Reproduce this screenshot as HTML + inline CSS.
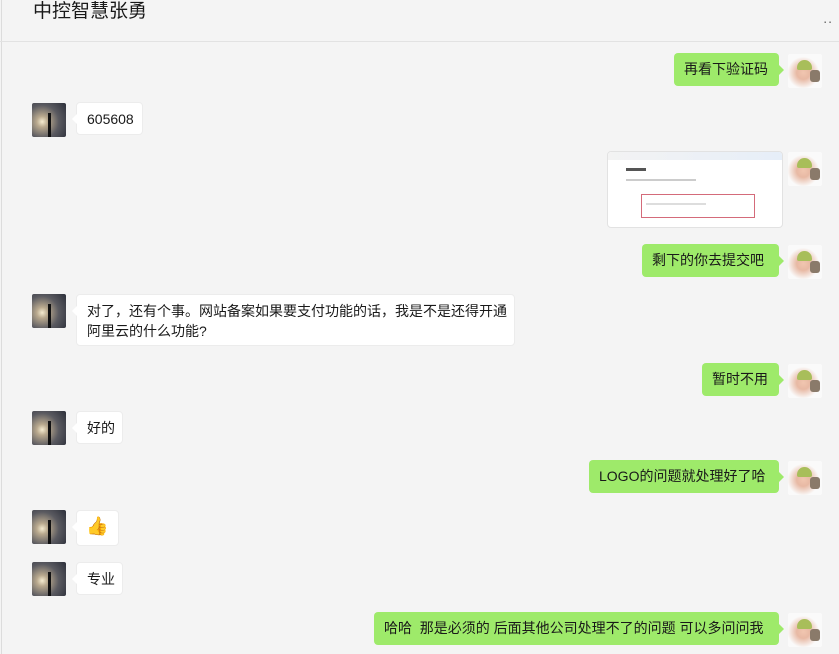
<!DOCTYPE html><html><head><meta charset="utf-8"><style>
body{margin:0;width:839px;height:654px;background:#f4f4f4;font-family:"Liberation Sans","Noto Sans CJK SC",sans-serif;position:relative;overflow:hidden;color:#191919}
.hd{position:absolute;left:0;top:0;width:839px;height:41px;border-bottom:1px solid #e2e2e2}
.t{position:absolute;left:33px;top:0;font-size:19px;line-height:24px}
.dots{position:absolute;right:6px;top:10px;font-size:14px;color:#666;letter-spacing:1px}
.vl{position:absolute;left:1px;top:0;width:1px;height:654px;background:#dcdcdc}
.b{position:absolute;font-size:14px;line-height:20px;padding:6px 10px;box-sizing:border-box;border-radius:4px;white-space:nowrap}
.g{background:#9eea6a}
.g:after{content:"";position:absolute;right:-5px;top:12px;border:5px solid transparent;border-right:0;border-left-color:#9eea6a}
.w{background:#fff;border:1px solid #ececec}
.w:before{content:"";position:absolute;left:-5px;top:11px;border:5px solid transparent;border-left:0;border-right-color:#fff}
.al,.ar{position:absolute;width:34px;height:34px;border-radius:2px}
.al{left:32px;background:radial-gradient(circle at 30% 55%,#f6ecd0 0,#b9a98e 18%,#5a5a60 55%,#2c2f3a 100%)}
.al:after{content:"";position:absolute;left:16px;top:10px;width:3px;height:24px;background:#111}
.ar{left:788px;background:radial-gradient(circle at 45% 55%,#f1c6b0 0,#e8b9a4 25%,#fafafa 60%);}
.ar:before{content:"";position:absolute;left:9px;top:6px;width:15px;height:10px;background:#a8be5a;border-radius:8px 8px 2px 2px}
.ar:after{content:"";position:absolute;left:22px;top:16px;width:10px;height:12px;background:#8a7a6a;border-radius:3px}
</style></head><body>
<div class="vl"></div>
<div class="hd"><div class="t">中控智慧张勇</div><div class="dots">..</div></div>

<div class="b g" style="left:674px;top:53px;width:105px;height:33px">再看下验证码</div><div class="ar" style="top:54px"></div>
<div class="al" style="top:103px"></div><div class="b w" style="left:76px;top:102px;width:67px;height:33px">605608</div>
<div style="position:absolute;left:607px;top:151px;width:176px;height:77px;background:#fff;border:1px solid #e2e2e2;border-radius:4px;box-sizing:border-box;overflow:hidden">
<div style="height:8px;background:linear-gradient(90deg,#f3f3f3,#e6eef8)"></div>
<div style="position:absolute;left:18px;top:16px;width:20px;height:3px;background:#555"></div>
<div style="position:absolute;left:18px;top:27px;width:70px;height:2px;background:#ccc"></div>
<div style="position:absolute;left:33px;top:42px;width:112px;height:22px;border:1px solid #d46b7a"></div>
<div style="position:absolute;left:38px;top:51px;width:60px;height:2px;background:#ddd"></div></div>
<div class="ar" style="top:152px"></div>
<div class="b g" style="left:642px;top:244px;width:137px;height:33px">剩下的你去提交吧</div><div class="ar" style="top:245px"></div>
<div class="al" style="top:294px"></div><div class="b w" style="left:76px;top:294px;width:439px;height:52px;padding:6px 8px 6px 10px">对了，还有个事。网站备案如果要支付功能的话，我是不是还得开通<br>阿里云的什么功能?</div>
<div class="b g" style="left:702px;top:363px;width:77px;height:33px">暂时不用</div><div class="ar" style="top:364px"></div>
<div class="al" style="top:411px"></div><div class="b w" style="left:76px;top:411px;width:47px;height:33px">好的</div>
<div class="b g" style="left:589px;top:460px;width:190px;height:33px">LOGO的问题就处理好了哈</div><div class="ar" style="top:461px"></div>
<div class="al" style="top:510px"></div><div class="b w" style="left:76px;top:510px;width:43px;height:36px;font-size:18px;padding:5px 9px">👍</div>
<div class="al" style="top:562px"></div><div class="b w" style="left:76px;top:562px;width:47px;height:33px">专业</div>
<div class="b g" style="left:374px;top:612px;width:405px;height:33px">哈哈&nbsp; 那是必须的 后面其他公司处理不了的问题 可以多问问我</div><div class="ar" style="top:613px"></div>
</body></html>
